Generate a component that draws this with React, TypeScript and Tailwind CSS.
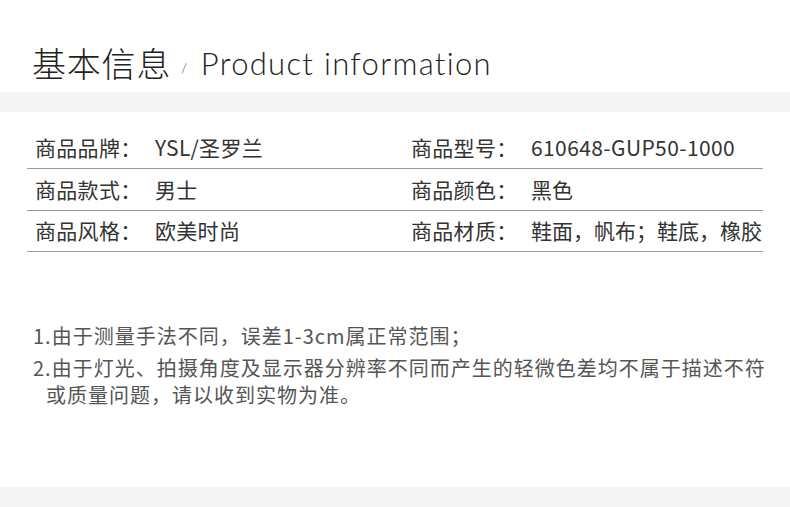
import React from 'react';

const cjk = "font-['Noto_Sans_CJK_SC',sans-serif]";

const rows: [string, string, string, string, string][] = [
  ['商品品牌：', 'YSL/圣罗兰', '商品型号：', '610648-GUP50-1000', 'h-[41px]'],
  ['商品款式：', '男士', '商品颜色：', '黑色', 'h-[42px]'],
  ['商品风格：', '欧美时尚', '商品材质：', '鞋面，帆布；鞋底，橡胶', 'h-[41px]'],
];

const App: React.FC = () => {
  return (
    <div className={`w-[790px] h-[507px] bg-white flex flex-col ${cjk}`}>
      {/* Title */}
      <div className="h-[92px] flex items-end pl-[32px] pb-[12px]">
        <span className="text-[34px] leading-none font-light text-[#222] tracking-[0.8px]">基本信息</span>
        <span className="text-[13px] leading-none font-light text-[#333] ml-[10px] mb-[5px] font-['Lato',sans-serif]">/</span>
        <span className="text-[31px] leading-none font-light text-[#222] ml-[14px] mb-[1px] tracking-[1.3px] font-['Lato',sans-serif]">
          Product information
        </span>
      </div>
      <div className="h-[20px] bg-[#f5f5f5]" />

      {/* Spec table */}
      <div className="mt-[16px] mx-[27px] w-[736px] flex flex-col">
        {rows.map((r, i) => (
          <div key={i} className={`${r[4]} border-b border-[#9a9a9a] flex items-center text-[21px] text-[#333] whitespace-nowrap`}>
            <div className="w-[376px] flex pl-[8px]">
              <span className="w-[120px] tracking-[0.3px]">{r[0]}</span>
              <span className="tracking-[0.3px]">{r[1]}</span>
            </div>
            <div className="flex pl-[8px]">
              <span className="w-[120px] tracking-[0.3px]">{r[2]}</span>
              <span className={i === 0 ? 'tracking-[0.4px]' : 'tracking-[0px]'}>{r[3]}</span>
            </div>
          </div>
        ))}
      </div>

      {/* Notes */}
      <div className="mt-[70px] pl-[33px] pr-[10px] text-[20px] text-[#555] tracking-[1px] whitespace-nowrap">
        <p className="leading-[27px]">1.由于测量手法不同，误差1-3cm属正常范围；</p>
        <p className="leading-[27px] mt-[5px]">2.由于灯光、拍摄角度及显示器分辨率不同而产生的轻微色差均不属于描述不符</p>
        <p className="leading-[27px] pl-[13px]">或质量问题，请以收到实物为准。</p>
      </div>

      <div className="mt-auto h-[20px] bg-[#f5f5f5]" />
    </div>
  );
};

export default App;
